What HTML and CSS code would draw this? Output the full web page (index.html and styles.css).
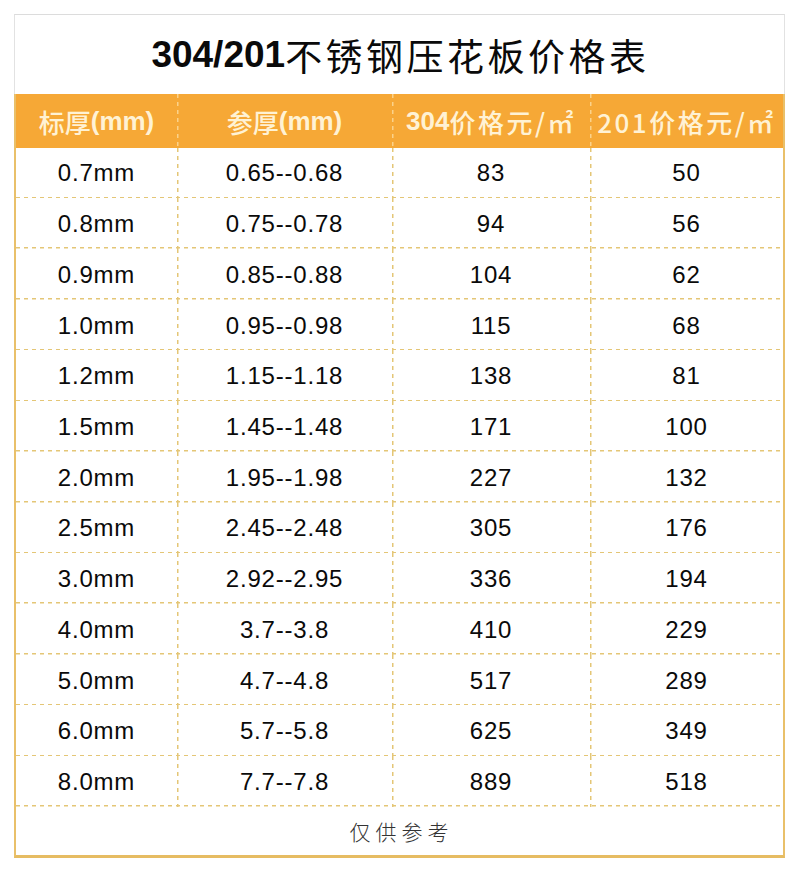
FILE: index.html
```html
<!DOCTYPE html>
<html lang="zh">
<head>
<meta charset="utf-8">
<title>304/201不锈钢压花板价格表</title>
<link rel="stylesheet" href="styles.css">
</head>
<body>
<div class="sheet">
  <div class="title"><span class="title-num">304/201</span><span class="title-cjk">不锈钢压花板价格表</span></div>
  <div class="table">
    <div class="row head">
      <div class="cell"><span class="cjk">标厚</span><span class="lat">(mm)</span></div>
      <div class="cell"><span class="cjk">参厚</span><span class="lat">(mm)</span></div>
      <div class="cell"><span class="lat">304</span><span class="cjk sp">价格元/㎡</span></div>
      <div class="cell"><span class="cjk sp">201价格元/㎡</span></div>
    </div>
    <div class="row"><div class="cell">0.7mm</div><div class="cell">0.65--0.68</div><div class="cell">83</div><div class="cell">50</div></div>
    <div class="row"><div class="cell">0.8mm</div><div class="cell">0.75--0.78</div><div class="cell">94</div><div class="cell">56</div></div>
    <div class="row"><div class="cell">0.9mm</div><div class="cell">0.85--0.88</div><div class="cell">104</div><div class="cell">62</div></div>
    <div class="row"><div class="cell">1.0mm</div><div class="cell">0.95--0.98</div><div class="cell">115</div><div class="cell">68</div></div>
    <div class="row"><div class="cell">1.2mm</div><div class="cell">1.15--1.18</div><div class="cell">138</div><div class="cell">81</div></div>
    <div class="row"><div class="cell">1.5mm</div><div class="cell">1.45--1.48</div><div class="cell">171</div><div class="cell">100</div></div>
    <div class="row"><div class="cell">2.0mm</div><div class="cell">1.95--1.98</div><div class="cell">227</div><div class="cell">132</div></div>
    <div class="row"><div class="cell">2.5mm</div><div class="cell">2.45--2.48</div><div class="cell">305</div><div class="cell">176</div></div>
    <div class="row"><div class="cell">3.0mm</div><div class="cell">2.92--2.95</div><div class="cell">336</div><div class="cell">194</div></div>
    <div class="row"><div class="cell">4.0mm</div><div class="cell">3.7--3.8</div><div class="cell">410</div><div class="cell">229</div></div>
    <div class="row"><div class="cell">5.0mm</div><div class="cell">4.7--4.8</div><div class="cell">517</div><div class="cell">289</div></div>
    <div class="row"><div class="cell">6.0mm</div><div class="cell">5.7--5.8</div><div class="cell">625</div><div class="cell">349</div></div>
    <div class="row"><div class="cell">8.0mm</div><div class="cell">7.7--7.8</div><div class="cell">889</div><div class="cell">518</div></div>
    <div class="foot">仅供参考</div>
  </div>
</div>
</body>
</html>
```

FILE: styles.css
```css
html, body {
  margin: 0;
  padding: 0;
  background: #ffffff;
}
body {
  width: 800px;
  height: 873px;
  font-family: "Liberation Sans", Arial, "Noto Sans CJK SC", sans-serif;
  color: #111;
}
.sheet {
  margin: 14px 0 0 14px;
  width: 771px;
  box-sizing: border-box;
}
.title {
  height: 80px;
  box-sizing: border-box;
  border-top: 1px solid #dcdcdc;
  border-left: 1px solid #e2e2e2;
  border-right: 1px solid #e2e2e2;
  display: flex;
  align-items: center;
  justify-content: center;
  padding-left: 2px;
}
.title-num {
  font-family: "Liberation Sans", Arial, sans-serif;
  font-weight: bold;
  font-size: 37px;
  color: #0a0a0a;
}
.title-cjk {
  font-family: "Noto Sans CJK SC", sans-serif;
  font-weight: 400;
  font-size: 37px;
  letter-spacing: 3.5px;
  color: #0a0a0a;
}
.table {
  border-left: 2px solid #e9c06a;
  border-right: 2px solid #e9c06a;
  border-bottom: 3px solid #e6bc62;
  box-sizing: border-box;
}
.row {
  display: grid;
  grid-template-columns: 161px 215px 198px 1fr;
  height: 50.73px;
  box-sizing: border-box;
  background-image: repeating-linear-gradient(to right, #e4c676 0 4px, transparent 4px 8px);
  background-size: 100% 1.5px;
  background-position: left bottom;
  background-repeat: no-repeat;
}
.row.head {
  height: 53.5px;
  background: #f6a836;
}
.cell {
  display: flex;
  align-items: center;
  justify-content: center;
  font-size: 24px;
  letter-spacing: 0.8px;
  color: #0a0a0a;
  padding-top: 1px;
  background-image: repeating-linear-gradient(to bottom, #e4c676 0 4px, transparent 4px 8px);
  background-size: 1.5px 100%;
  background-position: left top;
  background-repeat: no-repeat;
}
.cell:first-child {
  background-image: none;
}
.head .cell {
  color: #fff2d4;
  font-size: 26px;
  letter-spacing: 0;
  background-image: repeating-linear-gradient(to bottom, #fbd28a 0 4px, transparent 4px 8px);
}
.head .cell:first-child {
  background-image: none;
}
.head .cjk {
  font-family: "Noto Sans CJK SC", sans-serif;
  font-weight: 500;
}
.head .lat {
  font-family: "Liberation Sans", Arial, sans-serif;
  font-weight: bold;
}
.head .sp {
  letter-spacing: 2.5px;
}
.foot {
  height: 48px;
  display: flex;
  align-items: center;
  justify-content: center;
  font-family: "Noto Sans CJK SC", sans-serif;
  font-weight: 300;
  font-size: 21px;
  letter-spacing: 5px;
  color: #333;
  padding-left: 4px;
}
```
